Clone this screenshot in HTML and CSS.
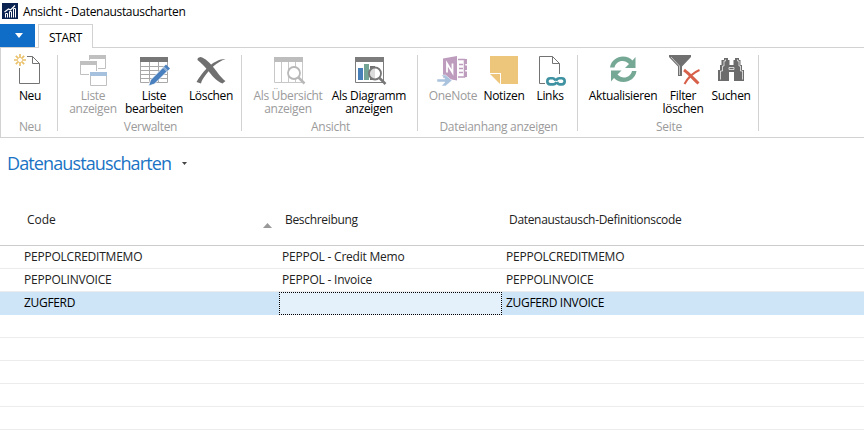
FILE: index.html
```html
<!DOCTYPE html>
<html lang="de">
<head>
<meta charset="utf-8">
<title>Ansicht - Datenaustauscharten</title>
<link rel="stylesheet" href="styles.css">
</head>
<body>
<header class="titlebar">
  <svg class="app-icon" width="16" height="16" viewBox="0 0 16 16"><rect width="16" height="16" fill="#0b2350"/><path d="M3.500 14.500V10.500h2V14.500M7.500 14.500V8.500h2V14.500M11.500 14.500V5.500h2v9" fill="none" stroke="#fff"/><path d="M2.500 9 6.500 6l2 1L13 2.500" fill="none" stroke="#fff" stroke-width="1.200"/></svg>
  <span class="title">Ansicht - Datenaustauscharten</span>
</header>
<nav class="tabs">
  <div class="app-menu"><svg width="8" height="5" viewBox="0 0 8 5"><path d="M0 0h8L4 5z" fill="#fff"/></svg></div>
  <div class="tab">START</div>
</nav>
<section class="ribbon">
  <div class="group g-new">
    <div class="buttons">
      <div class="btn">
        <svg width="36" height="34" viewBox="12 53 36 34"><path d="M32.500 56.500 39.500 63.500V83.500H19.500V68M27 56.500H32.500V63.500H39.500" fill="none" stroke="#737373"/><path d="M20 54v4M20 62v4M14 60h4M22 60h4M15.800 55.800l2.800 2.800M21.400 61.400l2.800 2.800M24.200 55.800l-2.800 2.800M18.600 61.400l-2.800 2.800" stroke="#eac06a" stroke-width="1.700"/></svg>
        <span>Neu</span>
      </div>
    </div>
    <div class="caption">Neu</div>
  </div>
  <div class="group g-manage">
    <div class="buttons">
      <div class="btn off">
        <svg width="36" height="34" viewBox="75 53 36 34"><g fill="#fff" stroke="#c0c0c0"><path d="M89.500 55.500h16v13h-16z"/><path d="M89 57h17" stroke-width="4"/></g><path d="M79 60h19v16H79z" fill="#fff"/><g fill="#fff" stroke="#c0c0c0"><path d="M80.500 61.500h16v13h-16z"/><path d="M80 63h17" stroke-width="4"/></g><path d="M89 71h19v16H89z" fill="#fff"/><path d="M90.500 72.500h16v13h-16z" fill="#fff" stroke="#c0c0c0"/><path d="M90 72h17v4H90z" fill="#a5c1de"/></svg>
        <span>Liste<br>anzeigen</span>
      </div>
      <div class="btn edit">
        <svg width="36" height="34" viewBox="136 53 36 34"><path d="M140.500 57.500h27v25h-27zM149.500 62v20M158.500 62v20M141 66.500h26M141 70.500h26M141 74.500h26M141 78.500h26" fill="#fff" stroke="#a8a8a8"/><path d="M140 57h28v5h-28z" fill="#777"/><path d="M148.500 86l2-6 13.500-13.500 4 4L154.500 84z" fill="#4a80bd" stroke="#fff" stroke-width=".8"/><path d="M164 66.500l2-2 4 4-2 2z" fill="#4a80bd"/><path d="M163 67.500l4 4" stroke="#dce8f4" stroke-width=".8"/></svg>
        <span>Liste<br>bearbeiten</span>
      </div>
      <div class="btn delete">
        <svg width="36" height="34" viewBox="193 53 36 34"><path d="M197.500 60Q197 57.500 200.500 57C205 58 210 63 214 68S221.500 78.500 225.500 81L222.500 83.500C216 81 211.500 75 208 70.500S201 63 197.500 60z" fill="#707070"/><path d="M225.500 59C217 62 210 69 206 74.500 203 78.500 201.500 81 201 83.500L196.500 82C199 77.500 204 70.500 209.500 66 214.500 61.500 220.500 58.700 225.500 59z" fill="#707070"/></svg>
        <span>Löschen</span>
      </div>
    </div>
    <div class="caption">Verwalten</div>
  </div>
  <div class="group g-view">
    <div class="buttons">
      <div class="btn off">
        <svg width="36" height="34" viewBox="270 53 36 34"><path d="M274.500 57.500h28v25h-28zM281.500 62v20M288.500 62v20M295.500 62v20" fill="#fff" stroke="#c8c8c8"/><path d="M274 57h29v5h-29z" fill="#bdbdbd"/><circle cx="294" cy="73" r="6" fill="#fff" stroke="#b8b8b8" stroke-width="1.800"/><path d="M298.500 77.500l6 6" stroke="#b8b8b8" stroke-width="2.500"/></svg>
        <span>Als Übersicht<br>anzeigen</span>
      </div>
      <div class="btn chart">
        <svg width="36" height="34" viewBox="351 53 36 34"><path d="M355.500 57.500h28v25h-28z" fill="#fff" stroke="#7c7c7c"/><path d="M355 57h29v5h-29z" fill="#7c7c7c"/><path d="M358 68h5v12h-5z" fill="#477fb8"/><path d="M364 64h5v16h-5z" fill="#74a594"/><path d="M370 66h5v14h-5z" fill="#707070"/><circle cx="375" cy="73.500" r="6" fill="#fff" fill-opacity=".75" stroke="#777" stroke-width="1.800"/><path d="M379.500 78l6 6" stroke="#777" stroke-width="2.500"/></svg>
        <span>Als Diagramm<br>anzeigen</span>
      </div>
    </div>
    <div class="caption">Ansicht</div>
  </div>
  <div class="group g-attach">
    <div class="buttons">
      <div class="btn off note">
        <svg width="36" height="34" viewBox="435 53 36 34"><path d="M458 59.500h6.500v17.500H458M459 64.500h4M459 68.500h4M459 72.500h4" fill="none" stroke="#bd9cbe" stroke-width="1.500"/><path d="M464 59h3v5h-3zM464 65.500h3v4.500h-3zM464 71.500h3v5.500h-3z" fill="#bd9cbe"/><path d="M443 58.500L457 56v24.500l-14-2.500z" fill="#bd9cbe"/><path d="M447 72.500v-9l5.500 9v-9" fill="none" stroke="#fff" stroke-width="1.800"/><path d="M437 79h8l-3.500-4h4l6.500 5.500-6.500 5.500h-4l3.500-4H437z" fill="#a9c2de" stroke="#fff" stroke-width=".5"/></svg>
        <span>OneNote</span>
      </div>
      <div class="btn memo">
        <svg width="36" height="34" viewBox="486 53 36 34"><path d="M490 56h28v28h-17V73h-11z" fill="#edc67c"/><path d="M490 74h10v10z" fill="#edc67c"/></svg>
        <span>Notizen</span>
      </div>
      <div class="btn links">
        <svg width="36" height="34" viewBox="532 53 36 34"><path d="M545 83.500h-5.500v-27h13l7 7V74M552.500 56.500v7h7" fill="none" stroke="#737373"/><g fill="none" stroke="#3f92a1" stroke-width="2.600"><path d="M555.500 80.500q-1-2.300-3-2.300h-2.200q-3 0-3 3.100t3 3.100h2.700q2.500 0 3.500-2.500"/><path d="M557 82q1 2.400 3 2.400h1.700q3 0 3-3.100t-3-3.100H559.500q-2.500 0-3.500 2.600"/></g></svg>
        <span>Links</span>
      </div>
    </div>
    <div class="caption">Dateianhang anzeigen</div>
  </div>
  <div class="group g-page">
    <div class="buttons">
      <div class="btn refresh">
        <svg width="36" height="34" viewBox="605 53 36 34"><g fill="#76a896"><path d="M610 67.500C611 60.500 617 56.500 623 56.500c4 0 7 1.500 9.500 4L635.500 57v11H625l4-4c-2-2-4-3-6.500-3-4 0-7 2.500-8 6.500z"/><path d="M636.500 71C635.500 78 629.500 82 623.500 82c-4 0-7-1.500-9.500-4L611 81.500V70.500h10.500l-4 4c2 2 4 3 6.500 3 4 0 7-2.500 8-6.500z"/></g></svg>
        <span>Aktualisieren</span>
      </div>
      <div class="btn">
        <svg width="36" height="34" viewBox="665 53 36 34"><path d="M669 55h22v2L682 66.500V76h-4V66.500L669 57z" fill="#707070"/><path d="M671 57l8.500 9V75" fill="none" stroke="#d0d0d0" stroke-width=".9"/><path d="M684 70c5 3.500 10 9.500 14.500 13.500M699.500 70c-6 2.500-12 8.500-15 14" stroke="#fff" stroke-width="4.500" fill="none"/><path d="M684 70c5 3.500 10 9.500 14.500 13.500" stroke="#d7604a" stroke-width="3" fill="none"/><path d="M699.500 70c-6 2.500-12 8.500-15 14" stroke="#d7604a" stroke-width="2" fill="none"/></svg>
        <span>Filter<br>löschen</span>
      </div>
      <div class="btn search">
        <svg width="36" height="34" viewBox="713 53 36 34"><g fill="#6c6c6c"><path d="M724 58h4v2h1.500v5h4v-5h1.500v-2h4v2h1.500v5h1.500v5h2v11h-10v-9h-5v9h-11V70h2v-5h1.500v-5H724z"/></g><path d="M725.500 59.500v1.500h-1.500v5h-1.500v5h-2v8.500M737.500 59.500v1.500h1.500v5h1.500v5h2v8.500M729 67.500h5v2h-5z" stroke="#fff" stroke-width=".7" fill="none"/></svg>
        <span>Suchen</span>
      </div>
    </div>
    <div class="caption">Seite</div>
  </div>
</section>
<h1 class="heading">Datenaustauscharten<svg width="5" height="3" viewBox="0 0 5 3"><path d="M0 0h5L2.500 3z" fill="#444"/></svg></h1>
<main class="list">
  <div class="row head">
    <div class="cell">Code<svg class="sort" width="9" height="5" viewBox="0 0 9 5"><path d="M4.500 0L9 5H0z" fill="#999"/></svg></div>
    <div class="cell">Beschreibung</div>
    <div class="cell">Datenaustausch-Definitionscode</div>
  </div>
  <div class="row"><div class="cell">PEPPOLCREDITMEMO</div><div class="cell">PEPPOL - Credit Memo</div><div class="cell">PEPPOLCREDITMEMO</div></div>
  <div class="row"><div class="cell">PEPPOLINVOICE</div><div class="cell">PEPPOL - Invoice</div><div class="cell">PEPPOLINVOICE</div></div>
  <div class="row selected"><div class="cell">ZUGFERD</div><div class="cell focus"></div><div class="cell">ZUGFERD INVOICE</div></div>
  <div class="row"></div>
  <div class="row"></div>
  <div class="row"></div>
  <div class="row"></div>
  <div class="row"></div>
</main>
</body>
</html>
```
FILE: styles.css
```css
* { box-sizing: border-box; }
body {
  margin: 0;
  height: 435px;
  overflow: hidden;
  background: #fff;
  color: #000;
  font: 12px/13px "Open Sans", "Noto Sans", sans-serif;
  letter-spacing: -0.32px;
}
svg { display: block; flex: none; }

.titlebar { display: flex; align-items: center; height: 24px; padding: 0 0 2px 2px; gap: 5px; }

.tabs { display: flex; height: 24px; position: relative; margin-bottom: -1px; }
.app-menu { width: 35px; height: 23px; background: #0f6cc7; display: flex; align-items: center; justify-content: center; padding-left: 2px; }
.tab {
  width: 55px; margin-left: 3px; background: #fff;
  border: 1px solid #d2d2d2; border-bottom: 0;
  display: flex; align-items: center; justify-content: center; padding-top: 1px;
  letter-spacing: -0.4px;
}

.ribbon { display: flex; height: 91px; border: 1px solid #d2d2d2; border-right: 0; padding-top: 5px; }
.group {
  display: flex; flex-direction: column; justify-content: space-between;
  height: 76px; margin-top: 2px; border-right: 1px solid #d2d2d2;
}
.g-new { width: 57px; }
.g-manage { width: 184px; }
.g-view { width: 176px; }
.g-attach { width: 160px; }
.g-page { width: 181px; }
.buttons { display: flex; margin-top: -2px; padding-left: 3px; }
.g-manage .buttons { padding-left: 9px; }
.g-view .buttons { padding-left: 8px; }
.g-attach .buttons { padding-left: 8px; }
.g-page .buttons { padding-left: 9px; }
.btn { display: flex; flex-direction: column; align-items: center; width: 52px; text-align: center; white-space: nowrap; }
.btn span { margin-top: 2px; }
.off, .caption { color: #9b9b9b; }
.edit { width: 60px; margin-left: 5px; }
.delete { width: 50px; margin-left: 2px; }
.g-view .off { width: 76px; }
.chart { width: 78px; margin-left: 4px; }
.note { width: 54px; }
.memo { width: 48px; }
.links { width: 36px; margin-left: 4px; }
.refresh { width: 72px; }
.refresh + .btn { width: 46px; margin-left: 1px; }
.search { width: 46px; margin-left: 2px; }
.caption { text-align: center; padding-left: 2px; margin-bottom: -2px; }

.heading {
  display: flex; align-items: center; gap: 11px;
  height: 54px; margin: 0; padding: 0 0 4px 7px;
  color: #1a73c4; font-size: 18px; font-weight: 400; letter-spacing: -0.88px;
}

.row {
  display: grid; grid-template-columns: 279px 224px 1fr; align-items: center;
  height: 23px; border-bottom: 1px solid #ececec;
  color: #222; letter-spacing: -0.22px;
}
.cell { padding: 0 0 2px 3px; }
.cell:first-child { padding-left: 24px; }
.head { height: 54px; border-color: #ccc; letter-spacing: -0.32px; }
.head .cell { padding: 2px 0 0 6px; }
.head .cell:first-child { padding-left: 27px; display: flex; letter-spacing: 0; }
.sort { margin: 10px 7px -2px auto; }
.selected { background: #cde5f7; color: #000; border-color: #cde5f7; letter-spacing: -0.32px; }
.selected .focus { height: 23px; width: 223px; background: #e4f1fa; border: 1px dotted #000; margin-bottom: -1px; }
```
